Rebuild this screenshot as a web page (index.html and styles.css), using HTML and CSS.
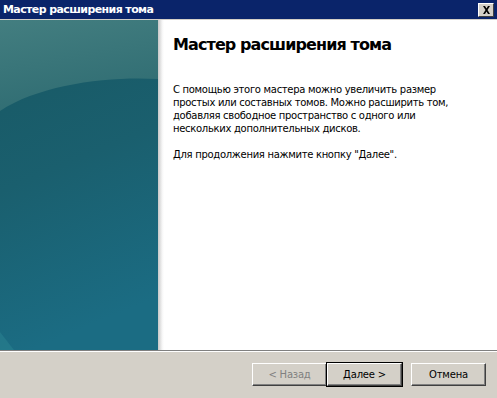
FILE: index.html
```html
<!DOCTYPE html>
<html lang="ru">
<head>
    <meta charset="UTF-8">
    <title>Мастер расширения тома</title>
    <link rel="stylesheet" href="styles.css">
</head>
<body>
    <div class="window">
        <div class="titlebar">
            <span class="title">Мастер расширения тома</span>
            <span class="close-btn">
                <svg width="9" height="8" viewBox="0 0 9 8">
                    <path d="M1 0h2l1.5 2.5L6 0h2L5.5 4 8 8H6L4.5 5.5 3 8H1l2.5-4z" fill="#000"/>
                </svg>
            </span>
        </div>
        <div class="main">
            <div class="sidebar">
                <svg width="158" height="330" viewBox="0 0 158 330" preserveAspectRatio="none">
                    <defs>
                        <linearGradient id="topGrad" x1="0" y1="0" x2="0.3" y2="1">
                            <stop offset="0" stop-color="#437e80"/>
                            <stop offset="1" stop-color="#306d73"/>
                        </linearGradient>
                        <linearGradient id="lowGrad" x1="0" y1="0" x2="0.2" y2="1">
                            <stop offset="0" stop-color="#185863"/>
                            <stop offset="0.5" stop-color="#1a5f6e"/>
                            <stop offset="1" stop-color="#1b6c83"/>
                        </linearGradient>
                    </defs>
                    <rect width="158" height="330" fill="url(#lowGrad)"/>
                    <path d="M0 0H158V59C110 56 40 64 0 91Z" fill="url(#topGrad)"/>
                    <path d="M0 312L14 330H0Z" fill="#2a8090" opacity="0.6"/>
                </svg>
            </div>
            <div class="shade"></div>
            <div class="content">
                <h1 class="heading">Мастер расширения тома</h1>
                <p class="text">С помощью этого мастера можно увеличить размер простых или составных томов. Можно расширить том, добавляя свободное пространство с одного или нескольких дополнительных дисков.</p>
                <p class="text">Для продолжения нажмите кнопку "Далее".</p>
            </div>
        </div>
        <div class="footer">
            <button class="btn disabled">&lt; Назад</button>
            <button class="btn default">Далее &gt;</button>
            <button class="btn cancel">Отмена</button>
        </div>
    </div>
</body>
</html>
```

FILE: styles.css
```css
body {
    margin: 0;
    font-family: "DejaVu Sans", "Liberation Sans", sans-serif;
    font-size: 11px;
    background: #d4d0c8;
}
.window {
    width: 497px;
    height: 398px;
    display: flex;
    flex-direction: column;
    overflow: hidden;
}
.titlebar {
    height: 19px;
    background: #0a246a;
    border-bottom: 1px solid #d4d0c8;
    display: flex;
    align-items: center;
    justify-content: space-between;
    padding: 0 3px 0 3px;
}
.title {
    color: #fff;
    font-weight: bold;
    font-size: 11px;
    letter-spacing: -0.6px;
}
.close-btn {
    width: 16px;
    height: 14px;
    box-sizing: border-box;
    background: #d4d0c8;
    border: 1px solid;
    border-color: #fff #404040 #404040 #fff;
    display: flex;
    align-items: center;
    justify-content: center;
}
.main {
    height: 330px;
    display: flex;
    background: #fff;
}
.sidebar {
    width: 158px;
    height: 330px;
}
.sidebar svg {
    display: block;
}
.shade {
    width: 6px;
    background: linear-gradient(to right, #c8c8c8, #f6f6f6 70%, #fff);
}
.content {
    flex: 1;
    padding: 15px 12px 0 9px;
    color: #000;
}
.heading {
    font-size: 16px;
    font-weight: bold;
    margin: 0 0 28px 0;
    line-height: 20px;
    letter-spacing: -0.9px;
}
.text {
    margin: 0 0 13px 0;
    line-height: 13px;
    font-size: 10px;
    letter-spacing: -0.3px;
    width: 290px;
}
.footer {
    flex: 1;
    border-top: 1px solid #808080;
    box-shadow: inset 0 1px 0 #fff;
    display: flex;
    justify-content: flex-end;
    align-items: flex-start;
    padding: 12px 11px 0 0;
}
.btn {
    width: 75px;
    height: 23px;
    font-family: "DejaVu Sans", "Liberation Sans", sans-serif;
    font-size: 10px;
    letter-spacing: -0.2px;
    background: #d4d0c8;
    border: 1px solid;
    border-color: #fff #404040 #404040 #fff;
    box-shadow: inset -1px -1px 0 #808080;
    padding: 0;
    color: #000;
}
.btn.disabled {
    color: #808080;
}
.btn.default {
    outline: 1px solid #000;
    outline-offset: 0;
}
.btn.cancel {
    margin-left: 9px;
}
```
